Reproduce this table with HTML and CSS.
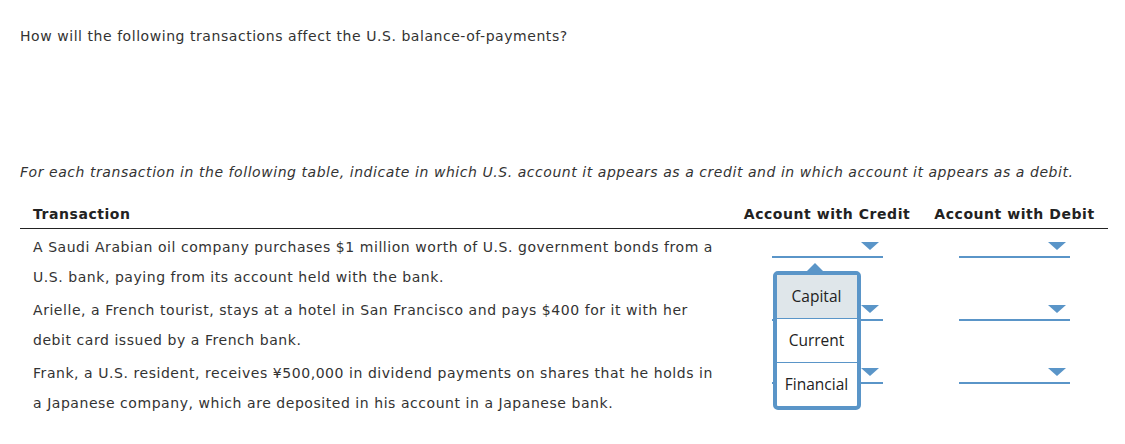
FILE: index.html
```html
<!DOCTYPE html>
<html>
<head>
<meta charset="utf-8">
<link rel="stylesheet" href="styles.css">
</head>
<body>
<div class="page">
  <p class="question">How will the following transactions affect the U.S. balance-of-payments?</p>
  <p class="instruction">For each transaction in the following table, indicate in which U.S. account it appears as a credit and in which account it appears as a debit.</p>
  <table class="grid">
    <thead>
      <tr>
        <th class="col-tx">Transaction</th>
        <th class="col-cr">Account with Credit</th>
        <th class="col-db">Account with Debit</th>
      </tr>
    </thead>
    <tbody>
      <tr>
        <td class="col-tx">A Saudi Arabian oil company purchases $1 million worth of U.S. government bonds from a U.S. bank, paying from its account held with the bank.</td>
        <td class="col-cr">
          <div class="select open">
            <span class="arrow"></span>
            <div class="popup">
              <span class="caret"></span>
              <div class="opt active">Capital</div>
              <div class="opt">Current</div>
              <div class="opt">Financial</div>
            </div>
          </div>
        </td>
        <td class="col-db"><div class="select"><span class="arrow"></span></div></td>
      </tr>
      <tr>
        <td class="col-tx">Arielle, a French tourist, stays at a hotel in San Francisco and pays $400 for it with her debit card issued by a French bank.</td>
        <td class="col-cr"><div class="select"><span class="arrow"></span></div></td>
        <td class="col-db"><div class="select"><span class="arrow"></span></div></td>
      </tr>
      <tr>
        <td class="col-tx">Frank, a U.S. resident, receives ¥500,000 in dividend payments on shares that he holds in a Japanese company, which are deposited in his account in a Japanese bank.</td>
        <td class="col-cr"><div class="select"><span class="arrow"></span></div></td>
        <td class="col-db"><div class="select"><span class="arrow"></span></div></td>
      </tr>
    </tbody>
  </table>
</div>
</body>
</html>
```
FILE: styles.css
```css
html, body {
  margin: 0;
  padding: 0;
  background: #fff;
}
.page {
  padding: 26px 17px 0 20px;
  font-family: "DejaVu Sans", Verdana, sans-serif;
  font-size: 14px;
  letter-spacing: 0.55px;
  color: #333;
}
.question {
  margin: 0;
  line-height: 20px;
}
.instruction {
  margin: 116px 0 0 0;
  line-height: 20px;
  font-style: italic;
}
.grid {
  margin-top: 22px;
  width: 1088px;
  border-collapse: collapse;
  table-layout: fixed;
}
.grid th, .grid td {
  box-sizing: border-box;
}
.grid th {
  font-weight: bold;
  color: #222;
  line-height: 20px;
  padding: 0 0 4px 0;
  border-bottom: 1px solid #222;
}
.grid th.col-tx {
  text-align: left;
  padding-left: 13px;
}
.col-tx { width: 713px; }
.col-cr { width: 188px; }
.col-db { width: 187px; }
.grid td {
  vertical-align: top;
  padding: 3px 0 0 0;
  line-height: 30px;
}
.grid td.col-tx {
  padding-left: 13px;
  padding-right: 8px;
}
.grid td.col-cr, .grid td.col-db {
  text-align: center;
}
.select {
  position: relative;
  display: inline-block;
  width: 111px;
  height: 24px;
  border-bottom: 2px solid #5a95c8;
  vertical-align: top;
}
.arrow {
  position: absolute;
  right: 4px;
  bottom: 6px;
  width: 0;
  height: 0;
  border-left: 9px solid transparent;
  border-right: 9px solid transparent;
  border-top: 8px solid #5a95c8;
}
.popup {
  position: absolute;
  left: 1px;
  top: 39px;
  width: 80px;
  border: 4px solid #5a95c8;
  border-radius: 5px;
  background: #fff;
  z-index: 5;
  letter-spacing: 0;
}
.caret {
  position: absolute;
  left: 30px;
  top: -12px;
  width: 0;
  height: 0;
  border-left: 8px solid transparent;
  border-right: 8px solid transparent;
  border-bottom: 8px solid #5a95c8;
}
.opt {
  font-family: "Open Sans", "DejaVu Sans", sans-serif;
  font-size: 15.5px;
  line-height: 43px;
  height: 43px;
  color: #222;
  text-align: center;
  border-top: 1px solid #5a95c8;
}
.opt:first-of-type {
  border-top: none;
}
.opt.active {
  background: #dfe6ea;
}
```
